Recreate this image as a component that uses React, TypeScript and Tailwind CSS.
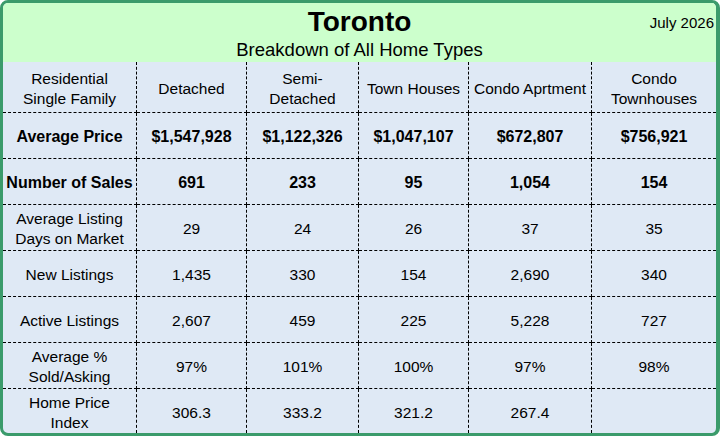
const headers = [
  ["Residential", "Single Family"],
  ["Detached"],
  ["Semi-", "Detached"],
  ["Town Houses"],
  ["Condo Aprtment"],
  ["Condo", "Townhouses"],
];

type Row = { label: string[]; values: string[]; bold?: boolean };

const rows: Row[] = [
  { label: ["Average Price"], values: ["$1,547,928", "$1,122,326", "$1,047,107", "$672,807", "$756,921"], bold: true },
  { label: ["Number of Sales"], values: ["691", "233", "95", "1,054", "154"], bold: true },
  { label: ["Average Listing", "Days on Market"], values: ["29", "24", "26", "37", "35"] },
  { label: ["New Listings"], values: ["1,435", "330", "154", "2,690", "340"] },
  { label: ["Active Listings"], values: ["2,607", "459", "225", "5,228", "727"] },
  { label: ["Average %", "Sold/Asking"], values: ["97%", "101%", "100%", "97%", "98%"] },
  { label: ["Home Price", "Index"], values: ["306.3", "333.2", "321.2", "267.4", ""] },
];

function Cell({ lines, bold, last, lastRow }: { lines: string[]; bold?: boolean; last?: boolean; lastRow?: boolean }) {
  return (
    <div
      className={`flex flex-col items-center justify-center pt-[3px] text-center leading-[20px] border-dashed border-black ${
        last ? "" : "border-r"
      } ${lastRow ? "" : "border-b"} ${bold ? "font-bold text-[16px]" : "text-[15.5px]"}`}
    >
      {lines.map((l, i) => (
        <span key={i} className="whitespace-nowrap">
          {l}
        </span>
      ))}
    </div>
  );
}

export default function App() {
  return (
    <div
      className="w-[720px] h-[436px] overflow-hidden text-black"
      style={{ fontFamily: '"Liberation Sans", Arial, sans-serif' }}
    >
      <div className="h-full w-full flex flex-col rounded-[8px] border-[3px] border-r-4 border-[#3b9b6b] overflow-hidden bg-[#dfe9f5]">
        <div className="h-[59px] shrink-0 bg-[#ccffcc] relative flex flex-col items-center">
          <div className="text-[28px] font-bold leading-[32px] mt-[3px]">Toronto</div>
          <div className="text-[18.5px] leading-[22px] mt-[1px]">Breakdown of All Home Types</div>
          <div className="absolute right-[2px] top-[11px] text-[15px] leading-[18px]">July 2026</div>
        </div>
        <div className="flex-1 grid grid-cols-[134px_110px_112px_110px_123px_124px] grid-rows-[51px_46px_46px_46px_46px_46px_46px_1fr]">
          {headers.map((h, i) => (
            <Cell key={i} lines={h} last={i === 5} />
          ))}
          {rows.map((r, ri) =>
            [r.label, ...r.values.map((v) => (v ? [v] : []))].map((lines, ci) => (
              <Cell
                key={`${ri}-${ci}`}
                lines={lines}
                bold={r.bold}
                last={ci === 5}
                lastRow={ri === rows.length - 1}
              />
            ))
          )}
        </div>
      </div>
    </div>
  );
}
